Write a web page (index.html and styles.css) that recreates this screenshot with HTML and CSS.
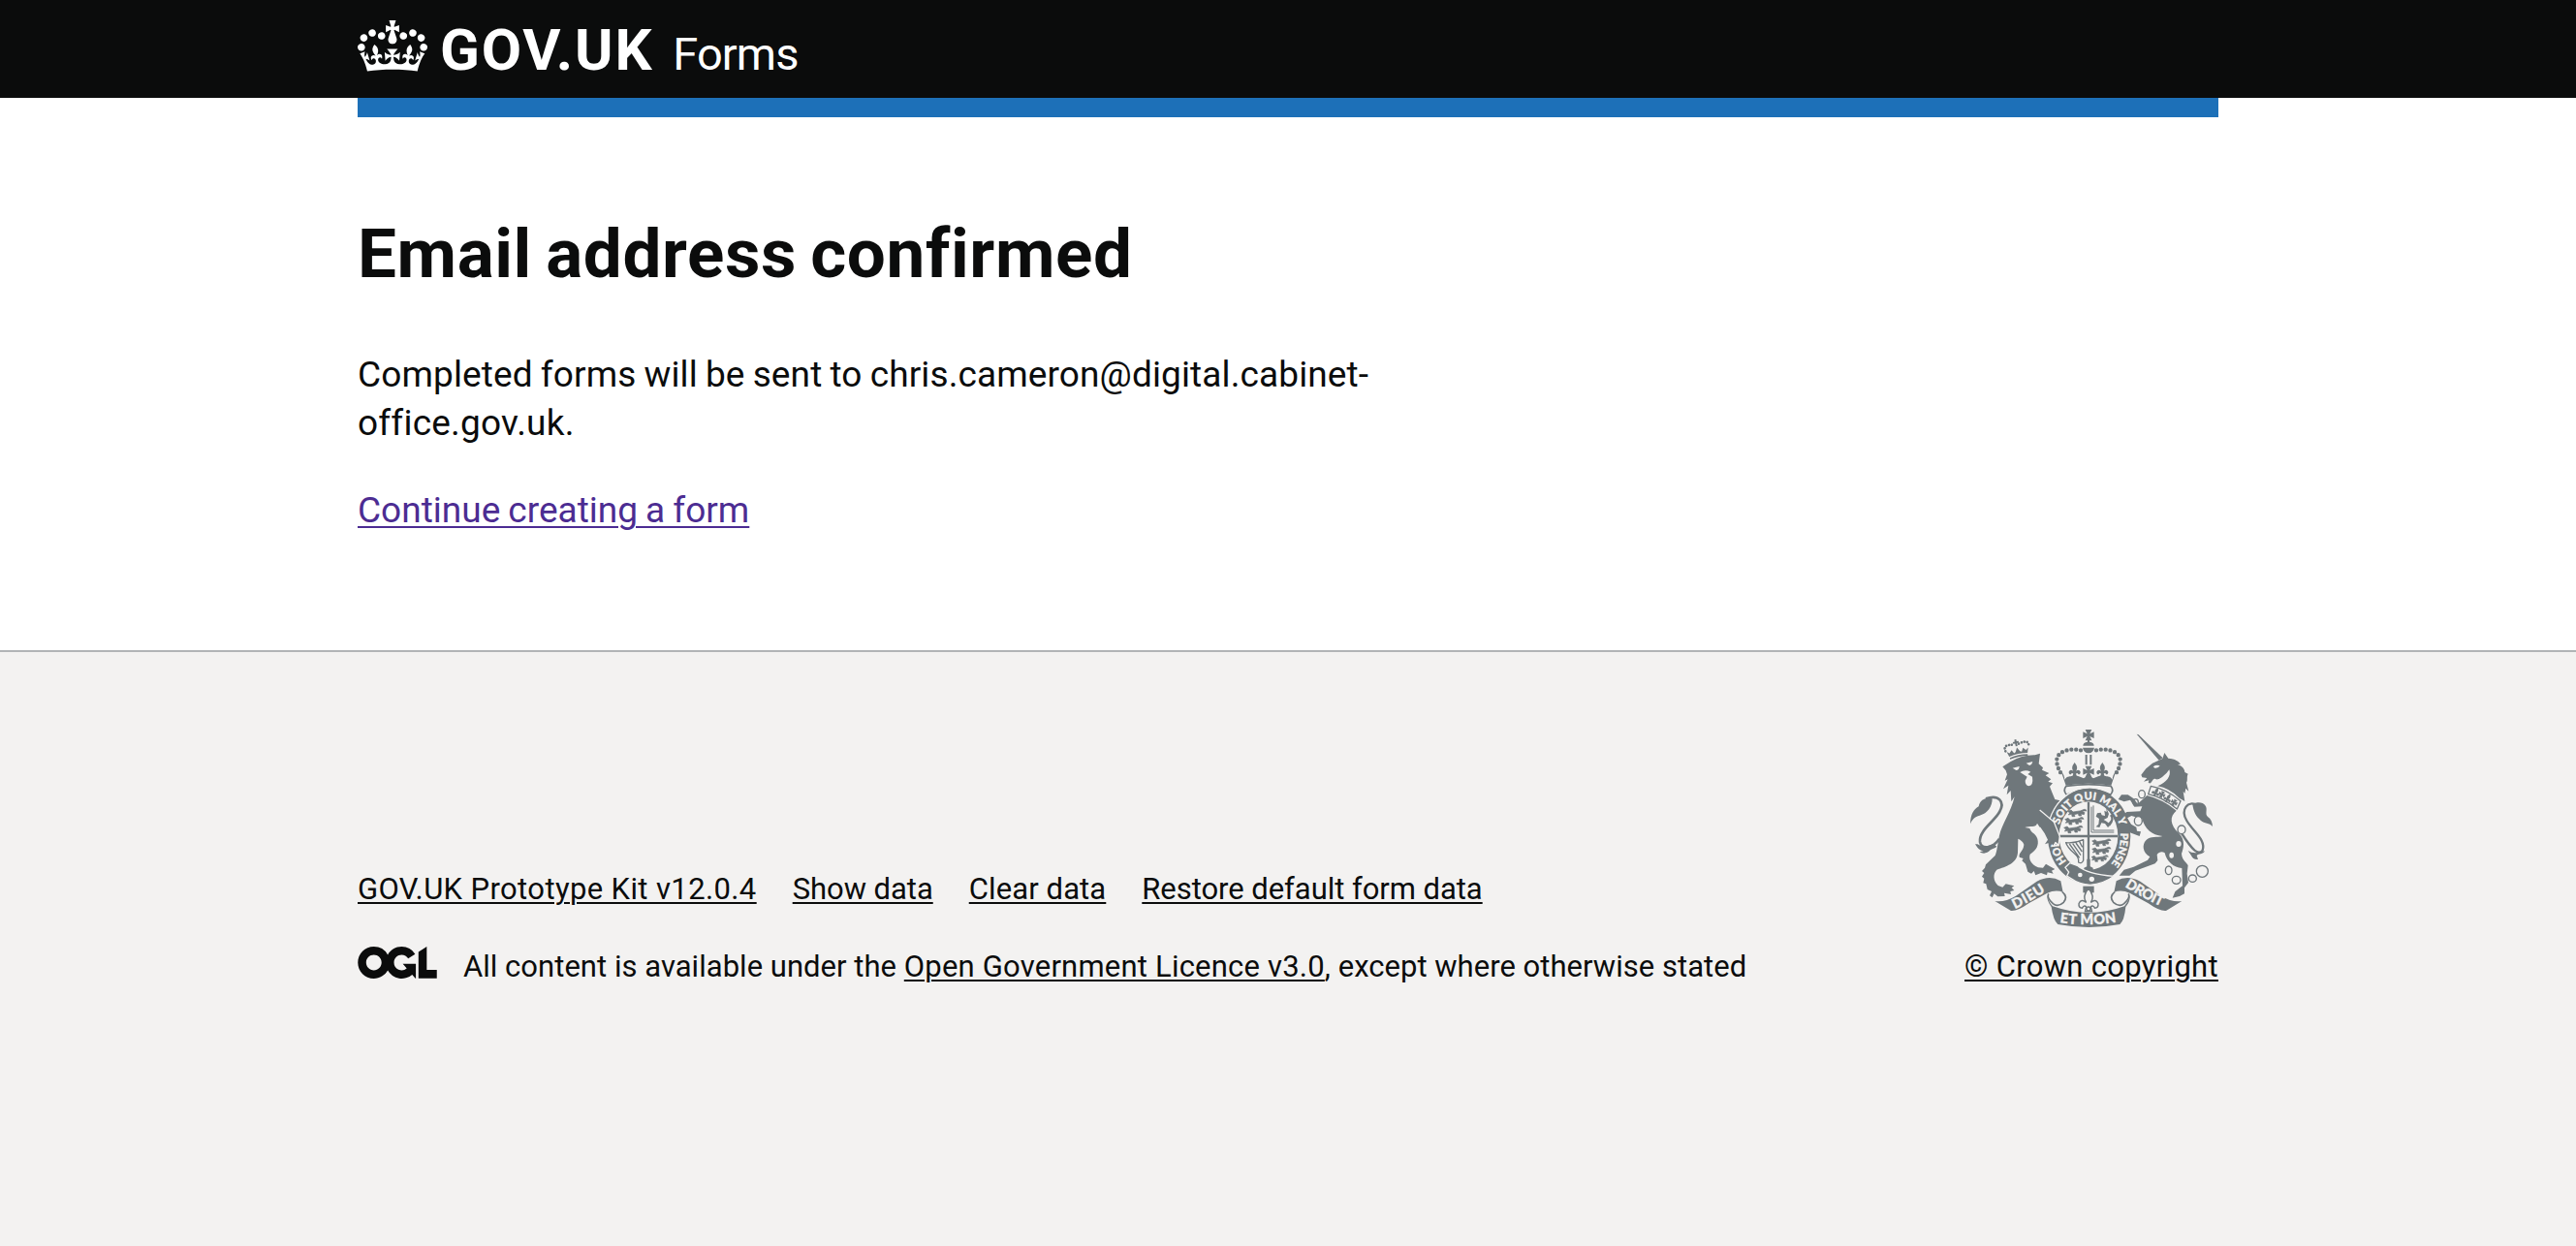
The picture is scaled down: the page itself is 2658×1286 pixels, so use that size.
FILE: index.html
```
<!DOCTYPE html>
<html lang="en">
<head>
<meta charset="utf-8">
<title>Email address confirmed – GOV.UK Forms</title>
<link rel="stylesheet" href="styles.css">
</head>
<body>
<header class="header">
  <div class="container header-inner">
    <svg class="crown" viewBox="0 0 132 97" aria-hidden="true"><path fill="currentColor" fill-rule="evenodd" d="M25 30.2c3.5 1.5 7.7-.2 9.1-3.7 1.5-3.6-.2-7.8-3.9-9.2-3.6-1.4-7.6.3-9.1 3.9-1.4 3.5.3 7.5 3.9 9zM9 39.5c3.6 1.5 7.8-.2 9.2-3.7 1.5-3.6-.2-7.8-3.9-9.1-3.6-1.5-7.6.2-9.1 3.8-1.4 3.5.3 7.5 3.8 9zM4.4 57.2c3.5 1.5 7.7-.2 9.1-3.8 1.5-3.6-.2-7.7-3.9-9.1-3.5-1.5-7.6.3-9.1 3.8-1.4 3.5.3 7.6 3.9 9.1zm38.3-21.4c3.5 1.5 7.7-.2 9.1-3.8 1.5-3.6-.2-7.7-3.9-9.1-3.6-1.5-7.6.3-9.1 3.8-1.3 3.6.4 7.7 3.9 9.1zm64.4-5.6c-3.6 1.5-7.8-.2-9.1-3.7-1.5-3.6.2-7.8 3.8-9.2 3.6-1.4 7.7.3 9.2 3.9 1.3 3.5-.4 7.5-3.9 9zm15.9 9.3c-3.6 1.5-7.7-.2-9.1-3.7-1.5-3.6.2-7.8 3.7-9.1 3.6-1.5 7.7.2 9.2 3.8 1.5 3.5-.3 7.5-3.8 9zm4.7 17.7c-3.6 1.5-7.8-.2-9.2-3.8-1.5-3.6.2-7.7 3.9-9.1 3.6-1.5 7.7.3 9.2 3.8 1.3 3.5-.4 7.6-3.9 9.1zM89.3 35.8c-3.6 1.5-7.8-.2-9.2-3.8-1.4-3.6.2-7.7 3.9-9.1 3.6-1.5 7.7.3 9.2 3.8 1.4 3.6-.3 7.7-3.9 9.1zM69.7 17.7l8.9 4.7V9.3l-8.9 2.8c-.2-.3-.5-.6-.9-.9L72.4 0H59.6l3.5 11.2c-.3.3-.6.5-.9.9l-8.8-2.8v13.1l8.8-4.7c.3.3.6.7.9.9l-5 15.4v.1c-.2.8-.4 1.6-.4 2.4 0 4.1 3.1 7.5 7 8.1h.2c.3 0 .7.1 1 .1.4 0 .7 0 1-.1h.2c4-.6 7.1-4.1 7.1-8.1 0-.8-.1-1.7-.4-2.4V34l-5.1-15.4c.4-.2.7-.6 1-.9zM66 92.8c16.9 0 32.8 1.1 47.1 3.2 4-16.9 8.9-26.7 14-33.5l-9.6-3.4c1 4.9 1.1 7.2 0 10.2-1.5-1.4-3-4.3-4.2-8.7L108.6 76c2.8-2 5-3.2 7.5-3.3-4.4 9.4-10 11.9-13.6 11.2-4.3-.8-6.3-4.6-5.6-7.9 1-4.7 5.7-5.9 8-.5 4.3-8.7-3-11.4-7.6-8.8 7.1-7.2 7.9-13.5 2.1-21.1-8 6.1-8.1 12.3-4.5 20.8-4.7-5.4-12.1-2.5-9.5 6.2 3.4-5.2 7.9-2 7.2 3.1-.6 4.3-6.4 7.8-13.5 7.2-10.3-.9-10.9-8-11.2-13.8 2.5-.5 7.1 1.8 11 7.3L80.2 60c-4.1 4.4-8 5.3-12.3 5.4 1.4-4.4 8-11.6 8-11.6H55.5s6.4 7.2 7.9 11.6c-4.2-.1-8-1-12.3-5.4l1.4 16.4c3.9-5.5 8.5-7.7 10.9-7.3-.3 5.8-.9 12.8-11.1 13.8-7.2.6-12.9-2.9-13.5-7.2-.7-5 3.8-8.3 7.1-3.1 2.7-8.7-4.6-11.6-9.4-6.2 3.7-8.5 3.6-14.7-4.6-20.8-5.8 7.6-5 13.9 2.2 21.1-4.7-2.6-11.9.1-7.7 8.8 2.3-5.5 7.1-4.2 8.1.5.7 3.3-1.3 7.1-5.7 7.9-3.5.7-9-1.8-13.5-11.2 2.5.1 4.7 1.3 7.5 3.3l-4.7-15.4c-1.2 4.4-2.7 7.2-4.3 8.7-1.1-3-.9-5.3 0-10.2l-9.5 3.4c5 6.9 9.9 16.7 14 33.5 14.8-2.1 30.8-3.2 47.7-3.2z"/></svg>
    <span class="wordmark">GOV.UK</span>
    <span class="product">Forms</span>
  </div>
</header>
<div class="container"><div class="bar"></div></div>
<main class="container main">
  <h1>Email address confirmed</h1>
  <p class="body">Completed forms will be sent to chris.cameron@digital.cabinet-<br><span class="body-end">office.gov.uk.</span></p>
  <p class="body"><a class="continue" href="#">Continue creating a form</a></p>
</main>
<footer class="footer">
  <div class="container footer-inner">
    <div class="meta">
      <nav class="links">
        <a class="kit" href="#">GOV.UK Prototype Kit v12.0.4</a>
        <a href="#">Show data</a>
        <a class="clear" href="#">Clear data</a>
        <a href="#">Restore default form data</a>
      </nav>
      <div class="licence">
        <svg class="ogl" viewBox="0 0 483.2 195.7" role="img" aria-label="OGL"><path fill="currentColor" d="M421.5 142.8V.1l-50.7 32.3v161.1h112.4v-50.7zm-122.3-9.6A47.12 47.12 0 0 1 221 97.8c0-26 21.1-47.1 47.1-47.1 16.7 0 31.4 8.7 39.7 21.8l42.7-27.2A97.63 97.63 0 0 0 268.1 0c-36.5 0-68.3 20.1-85.1 49.7A98 98 0 0 0 97.8 0C43.9 0 0 43.9 0 97.8s43.9 97.8 97.8 97.8c36.5 0 68.3-20.1 85.1-49.7a97.76 97.76 0 0 0 149.6 25.4l19.4 22.2h3v-87.8h-80l24.3 27.5zM97.8 145c-26 0-47.1-21.1-47.1-47.1s21.1-47.1 47.1-47.1 47.1 21.1 47.1 47.1S123.8 145 97.8 145"/></svg>
        <span class="licence-text">All content is available under the <a href="#">Open Government Licence v3.0</a>, except where otherwise stated</span>
      </div>
    </div>
    <div class="copyright">
      <svg class="crest" viewBox="51 39 786 612" aria-hidden="true">
        <defs>
          <path id="beltLeft" d="M368 448 A98 113 0 0 1 437 256 A98 113 0 0 1 535 369"/>
          <path id="beltRight" d="M534 359 A106 124 0 0 1 478 478"/>
          <path id="dieu" d="M207 594 Q250 575 312 533"/>
          <path id="droit" d="M547 525 Q605 562 668 590"/>
          <path id="etmon" d="M346 636 Q436 650 526 634"/>
          <g id="fleur"><path d="M0-21Q-12-6-4 4Q-13-3-17 6Q-18 14-11 14Q-8 8-4 12L-6 20H6L4 12Q8 8 11 14Q18 14 17 6Q13-3 4 4Q12-6 0-21Z"/></g>
          <g id="pattee"><path d="M-10-17H10L4-4L17-10V10L4 4L10 17H-10L-4 4L-17 10V-10L-4-4Z"/></g>
          <g id="walker"><path d="M0 4L10 0L16 6L42 2L52 8L50 14L40 12L42 18H34L32 11L20 14L22 20H13L12 13L2 15L6 9ZM40 3Q56-8 58 4" stroke-width="2"/></g>
        </defs>
        <!-- lion -->
        <g transform="translate(45 15)">
          <path class="line" stroke-width="8" d="M72 238C112 224 132 247 115 278C100 308 50 336 54 372C58 396 92 394 114 362"/>
          <path d="M24 316C25 286 34 272 50 262C54 240 74 233 92 238C92 262 78 284 53 290C38 294 30 302 24 316ZM39 379C52 376 57 389 72 387L96 377L106 386C100 392 91 392 86 397C76 409 62 409 53 403L65 400C52 398 46 390 39 379Z"/>
          <path d="M148 124L124 139L134 151L138 163L131 182L140 178L126 208L142 197L137 226L149 213L151 247L161 232C150 280 122 316 114 352C108 380 108 398 101 414L72 442L69 452L60 462L67 468L60 479L67 485L64 499L73 502L77 519L90 525L84 538L92 544L98 532L109 541L131 540L129 530L150 534L148 525L160 522L152 514L160 508L134 502L124 512L110 507C94 492 94 470 106 458C134 448 168 440 171 405L172 362C180 365 188 372 190 380C189 400 173 404 176 419L188 423L184 430L195 440L202 464L213 470L221 462L226 475L243 468L261 475L263 466L281 470L276 461L286 456L271 448L258 440L249 452L234 451C211 440 204 424 209 410C229 397 237 382 232 362C226 344 213 346 208 330L193 327C208 320 228 330 231 314L239 326L249 324L252 339L263 337L264 357L272 368L262 379L284 380L291 374L298 384L300 350L282 307L290 282L302 244L286 240L277 218L270 200L279 190L265 185L274 178L257 166L268 159L246 149L249 142L236 130L240 98L224 103Q184 102 148 124Z"/>
          <path class="bg" d="M155 143L176 138Q175 150 166 150ZM197 128L217 123Q215 134 207 135ZM178 156Q194 146 211 155L202 162L216 170Q220 196 205 199Q194 196 194 182L200 170Z"/>
          <g transform="translate(172 97) rotate(-12)">
            <path d="M-29 5L-34-11L-26-5L-18-13L-12-2L-7-5L0-18L7-5L12-2L18-13L26-5L34-11L29 5Q0-1-29 5ZM-28 9Q0 3 28 9V14Q0 8-28 14ZM-3-43H3V-37H9V-31H3V-22H-3V-31H-9V-37H-3Z"/>
            <path class="dots" stroke-width="8" d="M-37-14Q-42-37-8-28M8-28Q42-37 37-14"/>
          </g>
        </g>
        <!-- unicorn -->
        <g transform="translate(525 15)">
          <path d="M59 38L65 40L140 112L128 119Z"/>
          <path d="M139 114L145 96L157 113C178 114 190 123 195 131L186 132C201 137 208 148 208 156L218 161C213 170 218 181 213 188L220 215L211 206L208 222L203 215L208 246L192 237Q160 205 124 199C151 188 167 168 160 148L152 158C140 170 128 180 119 178C106 170 108 198 95 188L97 181L81 185L91 174L76 172L73 164L88 145L108 128Z"/>
          <path class="bg" d="M110 139Q120 132 131 136Q126 145 115 143Z"/>
          <path class="line" stroke-width="4" d="M103 199Q150 207 195 245L184 270Q137 232 95 224Z"/>
          <g transform="translate(119 217) rotate(25) scale(.7)"><use href="#fleur"/></g>
          <g transform="translate(137 225) rotate(28) scale(.6)"><use href="#pattee"/></g>
          <g transform="translate(156 236) rotate(30) scale(.7)"><use href="#fleur"/></g>
          <g transform="translate(175 250) rotate(33) scale(.6)"><use href="#pattee"/></g>
          <path d="M91 228Q140 240 182 275C160 293 162 320 190 345C211 366 204 393 198 408C199 430 217 438 218 445L215 470L219 498L207 514L207 532L192 540L170 545L178 526L190 516L201 508L199 453C174 452 152 433 146 406C136 400 128 404 122 411L124 429L116 439L55 461L37 476L5 476L20 458L50 449L93 428L100 418C77 406 75 380 88 367C101 352 124 359 139 354C105 351 84 331 76 301L43 291L30 298L42 317L58 326L60 338L72 340L68 354L38 343L20 305L16 291L28 279L70 277L76 262L52 263L39 242L20 247L2 240L12 226L32 226L50 238L62 254Z"/>
          <path class="line" stroke-width="7" d="M250 260C216 239 194 273 214 306C234 340 274 365 263 398C250 413 235 403 196 342"/>
          <path d="M232 256C246 246 265 249 271 259C281 270 268 286 280 295Q292 302 294 324C284 312 269 316 258 306C243 294 235 279 232 256ZM218 399Q236 412 270 400C264 411 252 408 245 414L249 426Q234 428 228 414Z"/>
          <g class="link"><ellipse cx="75" cy="224" rx="10" ry="12"/><ellipse cx="56" cy="249" rx="8" ry="10"/><ellipse class="bgfill" cx="64" cy="307" rx="12" ry="14"/><ellipse class="bgfill" cx="198" cy="334" rx="12" ry="13"/><ellipse cx="158" cy="460" rx="10" ry="13"/><ellipse cx="182" cy="490" rx="13" ry="12"/><ellipse cx="232" cy="485" rx="12" ry="11"/><circle cx="262" cy="463" r="18"/></g>
          <ellipse class="bg" cx="189" cy="378" rx="8" ry="9"/><ellipse class="bg" cx="167" cy="413" rx="7" ry="9"/>
        </g>
        <!-- royal crown -->
        <g transform="translate(435 56)">
          <use href="#pattee"/>
          <path d="M-3 15H3V21Q17 23 17 33H-17Q-17 23-3 21ZM-18 39H18Q15 55 0 56Q-15 55-18 39ZM-10 61H-4V92H-10ZM4 61H10V92H4Z"/>
          <path class="dots big" d="M-24 47C-55 40-94 48-98 75C-99 100-90 106-84 122"/>
          <path class="dots big" d="M24 47C55 40 94 48 98 75C99 100 90 106 84 122"/>
          <g transform="translate(-43 107) scale(1.05)"><use href="#fleur"/></g>
          <g transform="translate(43 107) scale(1.05)"><use href="#fleur"/></g>
          <g transform="translate(0 113)"><use href="#pattee"/></g>
          <path d="M-85 112Q-72 126-75 138Q-65 126-55 128L-43 124L-30 128L-15 134L0 124L15 134L30 128L43 124L55 128Q65 126 75 138Q72 126 85 112L70 156Q0 144-70 156Z"/>
          <path class="line" stroke-width="5" d="M-69 158Q0 148 69 158Q80 170 68 185Q0 150-68 185Q-80 170-69 158Z"/>
        </g>
        <!-- garter belt and shield -->
        <path class="cut" stroke-width="5" d="M437 219A130 151 0 0 0 332 459"/>
        <ellipse cx="437" cy="369" rx="128" ry="148"/>
        <ellipse class="bg" cx="435" cy="368" rx="91" ry="106"/>
        <path class="line" stroke-width="7" d="M345 369H525M435 263V472"/>
        <g class="charge">
          <use href="#walker" transform="translate(371 288)"/><use href="#walker" transform="translate(362 313)"/><use href="#walker" transform="translate(359 339)"/>
          <use href="#walker" transform="translate(446 380)"/><use href="#walker" transform="translate(446 405)"/><use href="#walker" transform="translate(444 430) scale(.9)"/>
        </g>
        <path class="line" stroke-width="3" d="M444 278V357H514M450 274V351H514"/>
        <path d="M462 298L473 296L476 304L486 306L484 290L491 294L490 282L498 300L494 312L482 318L493 325L502 335L495 342L486 330L475 328L469 342L458 340L466 332L468 315L458 308ZM494 330Q512 316 501 305L508 301Q518 318 502 337Z"/>
        <path class="line" stroke-width="4" d="M365 389Q392 392 419 380V444Q414 456 404 450C408 424 376 420 365 389ZM376 393L407 436M386 392L411 428M396 390L415 417M407 386L416 403"/>
        <path d="M430 440H440V463L449 467V475H421V467L430 463Z"/>
        <g class="motto small">
          <text><textPath href="#beltLeft" startOffset="1">HON</textPath></text>
          <text><textPath href="#beltLeft" startOffset="121" textLength="262">SOIT QUI MAL Y</textPath></text>
          <text><textPath href="#beltRight">PENSE</textPath></text>
        </g>
        <path class="edged" d="M363 466L377 452L402 461Q430 486 514 493Q480 518 440 520Q405 518 384 502L368 492L374 480Z"/>
        <circle class="bg" cx="409" cy="489" r="7"/><circle class="bg" cx="445" cy="502" r="8"/>
        <path class="line" stroke-width="5" d="M378 464Q390 479 380 494"/>
        <!-- lion's forepaw over the belt -->
        <path d="M284 289L326 326L344 370L340 394L333 386L326 398L318 388L300 394L309 380L299 360L285 340Z"/>
        <path class="cut" stroke-width="4" d="M284 288L328 325L346 370L342 397L333 389L326 401"/>
        <path d="M418 524H452V544H418Z"/>
        <g transform="translate(435 567) scale(1.75)"><use class="outline" href="#fleur"/></g>
        <circle class="line bgfill" stroke-width="4" cx="435" cy="594" r="6"/>
        <!-- scrolls -->
        <path d="M145 570Q175 575 210 554L275 509Q315 488 349 508L356 543Q334 533 306 546L250 577Q215 602 195 600ZM724 570Q694 575 660 554L595 509Q555 488 521 508L514 543Q536 533 564 546L620 577Q655 602 675 600Z"/>
        <path class="line" stroke-width="5" d="M354 542Q372 556 358 574Q340 590 325 578Q305 560 311 547M516 542Q498 556 512 574Q530 590 545 578Q565 560 559 547"/>
        <path d="M307 552Q306 570 320 588Q326 630 340 642Q437 660 532 642Q546 630 550 588Q565 570 563 552Q560 568 546 586Q437 626 324 586Q312 574 307 552Z"/>
        <g class="motto"><text><textPath href="#dieu" textLength="110">DIEU</textPath></text><text><textPath href="#droit" textLength="128">DROIT</textPath></text><text><textPath href="#etmon" textLength="176">ET MON</textPath></text></g>
      </svg>
      <a href="#">© Crown copyright</a>
    </div>
  </div>
</footer>
</body>
</html>
```
FILE: styles.css
```
* { box-sizing: border-box; }
html { background: #f3f2f1; }
body { margin: 0; background: #fff; color: #0b0c0c; font-family: Roboto, "Liberation Sans", sans-serif; }
.container { width: 1920px; margin: 0 auto; }

.header { height: 101px; background: #0b0c0c; color: #fff; }
.header-inner { display: flex; align-items: baseline; padding-top: 17px; }
.crown { width: 72px; height: 53px; display: block; flex: none; transform: translateY(2px); }
.wordmark { margin-left: 13px; font-size: 60px; line-height: 70px; font-weight: 700; letter-spacing: 1.8px; }
.product { margin-left: 20px; font-size: 47px; line-height: 60px; letter-spacing: -0.9px; }
.bar { height: 20px; background: #1d70b8; }

.main { padding: 91px 0 119px; }
h1 { margin: 0 0 50px; font-size: 71px; line-height: 100px; font-weight: 700; letter-spacing: 0.6px; word-spacing: -4px; }
.body { margin: 0; font-size: 37px; line-height: 50px; letter-spacing: 0.12px; word-spacing: -1.2px; }
.body + .body { margin-top: 40px; }
.body-end { letter-spacing: 0.2px; }

a { color: inherit; text-decoration-line: underline; text-decoration-thickness: 2px; text-underline-offset: 3px; }
.continue { color: #4c2c92; text-underline-offset: 4px; letter-spacing: 0.02px; }

.footer { border-top: 2px solid #b1b4b6; padding: 80px 0; background: #f3f2f1; font-size: 31px; line-height: 40px; }
.footer-inner { display: flex; justify-content: space-between; align-items: flex-end; }
.meta { display: flex; flex-direction: column; gap: 40px; }
.links { display: flex; gap: 37px; }
.links a { letter-spacing: -0.05px; }
.links .kit { letter-spacing: 0.38px; }
.links .clear { letter-spacing: 0.1px; }
.licence { display: flex; align-items: flex-start; }
.ogl { width: 82px; height: 33px; margin: -1px 27px 0 0; display: block; }
.licence-text { letter-spacing: 0.03px; }
.licence-text a { letter-spacing: 0.2px; }
.copyright { display: flex; flex-direction: column; gap: 21px; width: 262px; letter-spacing: 0.31px; white-space: nowrap; }

.crest { display: block; width: 262px; height: 204px; fill: #6f777b; letter-spacing: 0; }
.crest .line { fill: none; stroke: #6f777b; stroke-linejoin: round; }
.crest .cut { fill: none; stroke: #f3f2f1; }
.crest .bg { fill: #f3f2f1; }
.crest .edged { stroke: #f3f2f1; stroke-width: 4; }
.crest .link { fill: none; stroke: #6f777b; stroke-width: 4; }
.crest .bgfill { fill: #f3f2f1; }
.crest .outline { fill: #f3f2f1; stroke: #6f777b; stroke-width: 2.5; }
.crest .charge { stroke: #6f777b; stroke-width: 2; }
.crest .dots { fill: none; stroke: #6f777b; stroke-linecap: round; stroke-dasharray: 0 9; }
.crest .big { stroke-width: 13; stroke-dasharray: 0 14.5; }
.motto { fill: #f3f2f1; stroke: #f3f2f1; stroke-width: 1; font-family: Lato, sans-serif; font-weight: 900; font-size: 43px; }
.small { font-size: 33px; }
```
